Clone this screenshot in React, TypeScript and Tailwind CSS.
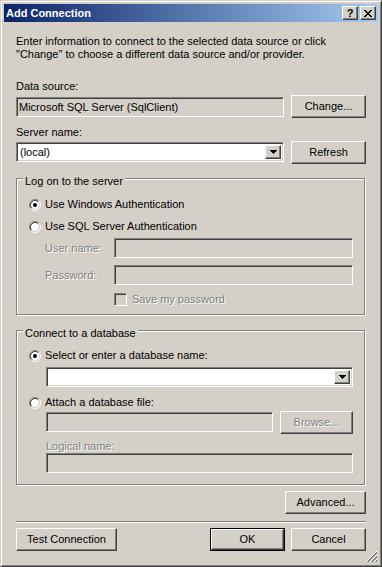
import React from "react";

const raised =
  "border border-t-white border-l-white border-b-[#404040] border-r-[#404040] shadow-[inset_-1px_-1px_0_#808080]";
const sunken =
  "border border-t-[#808080] border-l-[#808080] border-b-white border-r-white shadow-[inset_1px_1px_0_#404040,inset_-1px_-1px_0_#d4d0c8]";
const disabledText = "text-[#808080] [text-shadow:1px_1px_0_#ffffff]";

function Button({
  label,
  w,
  disabled,
  isDefault,
}: {
  label: string;
  w: string;
  disabled?: boolean;
  isDefault?: boolean;
}) {
  const inner = (
    <div
      className={`${raised} h-full w-full flex items-center justify-center bg-[#d4d0c8] ${
        disabled ? disabledText : "text-black"
      }`}
    >
      {label}
    </div>
  );
  if (isDefault) {
    return (
      <div className={`${w} h-[23px] border border-black shrink-0`}>{inner}</div>
    );
  }
  return <div className={`${w} h-[23px] shrink-0`}>{inner}</div>;
}

function Radio({ checked }: { checked?: boolean }) {
  return (
    <svg width="12" height="12" viewBox="0 0 12 12" className="shrink-0">
      <circle cx="6" cy="6" r="4.5" fill="#ffffff" />
      <path d="M2.11 9.89 A5.5 5.5 0 0 1 9.89 2.11" stroke="#808080" fill="none" strokeWidth="1" />
      <path d="M9.89 2.11 A5.5 5.5 0 0 1 2.11 9.89" stroke="#ffffff" fill="none" strokeWidth="1" />
      <path d="M2.82 9.18 A4.5 4.5 0 0 1 9.18 2.82" stroke="#404040" fill="none" strokeWidth="1" />
      <path d="M9.18 2.82 A4.5 4.5 0 0 1 2.82 9.18" stroke="#d4d0c8" fill="none" strokeWidth="1" />
      {checked && <circle cx="6" cy="6" r="2" fill="#000000" />}
    </svg>
  );
}

function DropArrow() {
  return (
    <div className={`${raised} w-[16px] h-full bg-[#d4d0c8] flex items-center justify-center shrink-0`}>
      <svg width="7" height="4" viewBox="0 0 7 4" shapeRendering="crispEdges">
        <rect x="0" y="0" width="7" height="1" fill="#000" />
        <rect x="1" y="1" width="5" height="1" fill="#000" />
        <rect x="2" y="2" width="3" height="1" fill="#000" />
        <rect x="3" y="3" width="1" height="1" fill="#000" />
      </svg>
    </div>
  );
}

function Combo({ w, value, h }: { w: string; value?: string; h: string }) {
  return (
    <div className={`${sunken} ${w} ${h} bg-white flex items-stretch p-[2px] shrink-0`}>
      <div className="flex-1 flex items-center pl-[1px] text-black">{value}</div>
      <DropArrow />
    </div>
  );
}

function Group({
  title,
  className,
  children,
}: {
  title: string;
  className: string;
  children: React.ReactNode;
}) {
  return (
    <div
      className={`relative border border-[#808080] shadow-[inset_1px_1px_0_#ffffff,1px_1px_0_#ffffff] w-[349px] ${className}`}
    >
      <div className="absolute top-[-4px] left-[6px] px-[2px] bg-[#d4d0c8] leading-[13px]">
        {title}
      </div>
      {children}
    </div>
  );
}

export default function App() {
  return (
    <div className="w-[382px] h-[567px] bg-[#d4d0c8] font-['Liberation_Sans',Arial,sans-serif] text-[11px] leading-[13px] text-black">
      <div className="w-full h-full border border-t-[#d4d0c8] border-l-[#d4d0c8] border-b-[#404040] border-r-[#404040] shadow-[inset_1px_1px_0_#ffffff,inset_-1px_-1px_0_#808080] p-[3px] flex flex-col">
        {/* Title bar */}
        <div className="h-[18px] shrink-0 bg-[linear-gradient(to_right,#0a246a,#a6caf0)] flex items-center pl-[2px] pr-[2px]">
          <div className="flex-1 text-white font-bold text-[11px]">Add Connection</div>
          <div className={`${raised} w-[16px] h-[14px] bg-[#d4d0c8] flex items-center justify-center font-bold text-[11px] leading-none text-black`}>
            ?
          </div>
          <div className={`${raised} w-[16px] h-[14px] bg-[#d4d0c8] flex items-center justify-center ml-[2px]`}>
            <svg width="8" height="7" viewBox="0 0 8 7" shapeRendering="crispEdges">
              <rect x="0" y="0" width="2" height="1" fill="#000" />
              <rect x="6" y="0" width="2" height="1" fill="#000" />
              <rect x="1" y="1" width="2" height="1" fill="#000" />
              <rect x="5" y="1" width="2" height="1" fill="#000" />
              <rect x="2" y="2" width="4" height="1" fill="#000" />
              <rect x="3" y="3" width="2" height="1" fill="#000" />
              <rect x="2" y="4" width="4" height="1" fill="#000" />
              <rect x="1" y="5" width="2" height="1" fill="#000" />
              <rect x="5" y="5" width="2" height="1" fill="#000" />
              <rect x="0" y="6" width="2" height="1" fill="#000" />
              <rect x="6" y="6" width="2" height="1" fill="#000" />
            </svg>
          </div>
        </div>

        {/* Client area */}
        <div className="relative flex-1 mt-[1px] px-[12px] flex flex-col">
          <p className="mt-[12px]">
            Enter information to connect to the selected data source or click
            <br />
            "Change" to choose a different data source and/or provider.
          </p>

          <div className="mt-[19px]">Data source:</div>
          <div className="mt-[2px] flex items-start">
            <div className={`${sunken} w-[268px] h-[20px] mt-[2px] bg-[#d4d0c8] flex items-center pl-[2px]`}>
              Microsoft SQL Server (SqlClient)
            </div>
            <div className="ml-[7px]">
              <Button label="Change..." w="w-[75px]" />
            </div>
          </div>

          <div className="mt-[8px]">Server name:</div>
          <div className="mt-[2px] flex items-start">
            <div className="mt-[1px]">
              <Combo w="w-[268px]" h="h-[20px]" value="(local)" />
            </div>
            <div className="ml-[7px]">
              <Button label="Refresh" w="w-[75px]" />
            </div>
          </div>

          {/* Log on group */}
          <Group title="Log on to the server" className="mt-[14px] pt-[17px] pl-[12px] pb-[8px]">
            <div className="h-[17px] flex items-center">
              <Radio checked />
              <span className="ml-[4px]">Use Windows Authentication</span>
            </div>
            <div className="mt-[5px] h-[17px] flex items-center">
              <Radio />
              <span className="ml-[4px]">Use SQL Server Authentication</span>
            </div>
            <div className="mt-[3px] h-[20px] flex items-center">
              <div className={`ml-[16px] w-[69px] ${disabledText}`}>User name:</div>
              <div className={`${sunken} w-[239px] h-[20px] bg-[#d4d0c8]`} />
            </div>
            <div className="mt-[7px] h-[20px] flex items-center">
              <div className={`ml-[16px] w-[69px] ${disabledText}`}>Password:</div>
              <div className={`${sunken} w-[239px] h-[20px] bg-[#d4d0c8]`} />
            </div>
            <div className="mt-[8px] h-[13px] flex items-center">
              <div className={`${sunken} ml-[85px] w-[13px] h-[13px] bg-[#d4d0c8]`} />
              <span className={`ml-[5px] ${disabledText}`}>Save my password</span>
            </div>
          </Group>

          {/* Connect group */}
          <Group title="Connect to a database" className="mt-[15px] pt-[16px] pl-[12px] pb-[11px]">
            <div className="h-[17px] flex items-center">
              <Radio checked />
              <span className="ml-[4px]">Select or enter a database name:</span>
            </div>
            <div className="mt-[3px] ml-[17px]">
              <Combo w="w-[307px]" h="h-[20px]" />
            </div>
            <div className="mt-[7px] h-[17px] flex items-center">
              <Radio />
              <span className="ml-[4px]">Attach a database file:</span>
            </div>
            <div className="ml-[17px] flex items-start">
              <div className={`${sunken} w-[227px] h-[20px] mt-[1px] bg-[#d4d0c8]`} />
              <div className="ml-[7px]">
                <Button label="Browse..." w="w-[73px]" disabled />
              </div>
            </div>
            <div className={`mt-[6px] ml-[17px] ${disabledText}`}>Logical name:</div>
            <div className={`ml-[17px] ${sunken} w-[307px] h-[20px] bg-[#d4d0c8]`} />
          </Group>

          <div className="mt-[6px] flex justify-end">
            <Button label="Advanced..." w="w-[81px]" />
          </div>

          <div className="mt-[7px] h-[2px] border-t border-t-[#808080] border-b border-b-white" />

          <div className="mt-[5px] flex items-start">
            <Button label="Test Connection" w="w-[101px]" />
            <div className="flex-1" />
            <Button label="OK" w="w-[75px]" isDefault />
            <div className="ml-[6px]">
              <Button label="Cancel" w="w-[75px]" />
            </div>
          </div>

          {/* Size grip */}
          <svg
            className="absolute right-0 bottom-0"
            width="13"
            height="13"
            viewBox="0 0 13 13"
            shapeRendering="crispEdges"
          >
            <path d="M12 1 L1 12" stroke="#ffffff" />
            <path d="M12 2 L2 12 M12 3 L3 12" stroke="#808080" />
            <path d="M12 5 L5 12" stroke="#ffffff" />
            <path d="M12 6 L6 12 M12 7 L7 12" stroke="#808080" />
            <path d="M12 9 L9 12" stroke="#ffffff" />
            <path d="M12 10 L10 12 M12 11 L11 12" stroke="#808080" />
          </svg>
        </div>
      </div>
    </div>
  );
}
